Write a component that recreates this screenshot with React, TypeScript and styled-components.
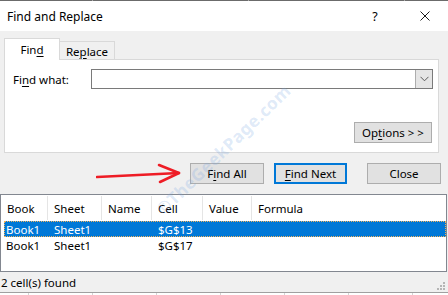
import styled, { createGlobalStyle } from 'styled-components'

const GlobalStyle = createGlobalStyle`
  html, body {
    margin: 0;
    padding: 0;
    background: #ffffff;
  }
  body {
    font-family: "Segoe UI", "Noto Sans", "Open Sans", sans-serif;
    font-size: 11.5px;
    color: #000000;
  }
`

const U = styled.span`
  text-decoration: underline;
  text-underline-offset: 2px;
  text-decoration-thickness: 1px;
`

export default function App() {
  return (
    <>
      <GlobalStyle />
      <Dialog>
        <TopEdge />
        <TitleBar>
          <Title>Find and Replace</Title>
          <TitleButtons>
            <Help>?</Help>
            <CloseGlyph viewBox="0 0 10 10">
              <path d="M0.5 0.5 L9.5 9.5 M9.5 0.5 L0.5 9.5" stroke="#1a1a1a" strokeWidth="1" />
            </CloseGlyph>
          </TitleButtons>
        </TitleBar>

        <Body>
          <TabRow>
            <Tab $active>
              Fin<U>d</U>
            </Tab>
            <Tab>
              Re<U>p</U>lace
            </Tab>
          </TabRow>

          <Panel>
            <FieldRow>
              <Label>
                Fi<U>n</U>d what:
              </Label>
              <Combo>
                <ComboInput />
                <ComboButton>
                  <svg width="9" height="6" viewBox="0 0 9 6">
                    <path d="M0.5 0.8 L4.5 4.8 L8.5 0.8" fill="none" stroke="#5a5a5a" strokeWidth="1" />
                  </svg>
                </ComboButton>
              </Combo>
            </FieldRow>
            <OptionsRow>
              <Button $w={78}>
                Op<U>t</U>ions &gt; &gt;
              </Button>
            </OptionsRow>
          </Panel>

          <ActionRow>
            <Arrow width="86" height="22" viewBox="0 0 86 22">
              <path d="M1 14 L83 10" stroke="#ee1c25" strokeWidth="2.6" strokeLinecap="round" />
              <path d="M63 2 L83 10 L64 19" fill="none" stroke="#ee1c25" strokeWidth="2.6" strokeLinecap="round" strokeLinejoin="round" />
            </Arrow>
            <Button $w={74}>
              F<U>i</U>nd All
            </Button>
            <Button $w={73} $default>
              <U>F</U>ind Next
            </Button>
            <Button $w={74} $gapLeft={10}>
              Close
            </Button>
          </ActionRow>

          <Results>
            <HeaderRow>
              <HeadCell>Book</HeadCell>
              <HeadCell>Sheet</HeadCell>
              <HeadCell>Name</HeadCell>
              <HeadCell>Cell</HeadCell>
              <HeadCell>Value</HeadCell>
              <HeadCell $last>Formula</HeadCell>
            </HeaderRow>
            <ResultRow $selected>
              <Cell>Book1</Cell>
              <Cell>Sheet1</Cell>
              <Cell />
              <Cell>$G$13</Cell>
              <Cell />
              <Cell />
            </ResultRow>
            <ResultRow>
              <Cell>Book1</Cell>
              <Cell>Sheet1</Cell>
              <Cell />
              <Cell>$G$17</Cell>
              <Cell />
              <Cell />
            </ResultRow>
          </Results>

          <StatusBar>
            <span>2 cell(s) found</span>
            <Grip width="9" height="9" viewBox="0 0 9 9">
              <rect x="6" y="0" width="2" height="2" fill="#b5b5b5" />
              <rect x="3" y="3" width="2" height="2" fill="#b5b5b5" />
              <rect x="6" y="3" width="2" height="2" fill="#b5b5b5" />
              <rect x="0" y="6" width="2" height="2" fill="#b5b5b5" />
              <rect x="3" y="6" width="2" height="2" fill="#b5b5b5" />
              <rect x="6" y="6" width="2" height="2" fill="#b5b5b5" />
            </Grip>
          </StatusBar>
        </Body>
        <BottomEdge />

        <Watermark>©TheGeekPage.com</Watermark>
      </Dialog>
    </>
  )
}

const Dialog = styled.div`
  position: relative;
  width: 448px;
  height: 295px;
  overflow: hidden;
  display: flex;
  flex-direction: column;
`

const TopEdge = styled.div`
  height: 1px;
  background: repeating-linear-gradient(
    to right,
    #6b6b6b 0px,
    #6b6b6b 92px,
    #a8a8a8 92px,
    #a8a8a8 93px,
    #6b6b6b 93px,
    #6b6b6b 156px
  );
`

const TitleBar = styled.div`
  height: 30px;
  background: #ffffff;
  display: flex;
  align-items: center;
  justify-content: space-between;
  padding: 0 0 0 7px;
`

const Title = styled.div`
  font-size: 12px;
  margin-top: 1px;
`

const TitleButtons = styled.div`
  display: flex;
  align-items: center;
`

const Help = styled.span`
  font-size: 12.5px;
  width: 12px;
  text-align: center;
  margin-right: 39px;
`

const CloseGlyph = styled.svg`
  width: 10px;
  height: 10px;
  margin-right: 18px;
`

const Body = styled.div`
  flex: 1;
  background: #f0f0f0;
  display: flex;
  flex-direction: column;
  padding-top: 7px;
`

const TabRow = styled.div`
  height: 21px;
  display: flex;
  align-items: flex-end;
  padding-left: 4px;
  position: relative;
  z-index: 1;
`

const Tab = styled.div<{ $active?: boolean }>`
  box-sizing: border-box;
  width: ${(p) => (p.$active ? 56 : 55)}px;
  height: ${(p) => (p.$active ? 22 : 18)}px;
  margin-bottom: ${(p) => (p.$active ? -1 : 0)}px;
  background: ${(p) => (p.$active ? '#ffffff' : '#f0f0f0')};
  border: 1px solid #d9d9d9;
  border-bottom: none;
  border-left: ${(p) => (p.$active ? '1px solid #d9d9d9' : 'none')};
  display: flex;
  align-items: center;
  justify-content: center;
  padding-top: ${(p) => (p.$active ? 0 : 1)}px;
`

const Panel = styled.div`
  box-sizing: border-box;
  height: 94px;
  margin: 0 9px 0 4px;
  background: #ffffff;
  border: 1px solid #d9d9d9;
  display: flex;
  flex-direction: column;
  padding: 9px 5px 0 8px;
`

const FieldRow = styled.div`
  display: flex;
  align-items: center;
  height: 20px;
`

const Label = styled.div`
  width: 78px;
  flex-shrink: 0;
`

const Combo = styled.div`
  box-sizing: border-box;
  flex: 1;
  height: 20px;
  border: 1px solid #7a7a7a;
  display: flex;
  background: #ffffff;
`

const ComboInput = styled.div`
  flex: 1;
`

const ComboButton = styled.div`
  box-sizing: border-box;
  width: 17px;
  background: #e5e5e5;
  border-left: 1px solid #adadad;
  display: flex;
  align-items: center;
  justify-content: center;
`

const OptionsRow = styled.div`
  display: flex;
  justify-content: flex-end;
  margin-top: 33px;
  padding-right: 1px;
`

const Button = styled.div<{ $w: number; $default?: boolean; $gapLeft?: number }>`
  box-sizing: border-box;
  width: ${(p) => p.$w}px;
  height: 21px;
  margin-left: ${(p) => p.$gapLeft ?? 0}px;
  background: #e1e1e1;
  border: ${(p) => (p.$default ? '2px solid #0078d7' : '1px solid #adadad')};
  display: flex;
  align-items: center;
  justify-content: center;
  flex-shrink: 0;
`

const ActionRow = styled.div`
  display: flex;
  align-items: center;
  gap: 10px;
  height: 21px;
  margin-top: 10px;
  padding-left: 96px;
`

const Arrow = styled.svg`
  flex-shrink: 0;
  margin-right: -2px;
`

const Results = styled.div`
  box-sizing: border-box;
  height: 78px;
  margin: 10px 1px 0 0;
  background: #ffffff;
  border: 1px solid #828790;
  display: flex;
  flex-direction: column;
`

const HeaderRow = styled.div`
  display: grid;
  grid-template-columns: 47px 54px 50px 51px 49px 1fr;
  height: 26px;
  padding-top: 1px;
  box-sizing: border-box;
`

const HeadCell = styled.div<{ $last?: boolean }>`
  display: flex;
  align-items: center;
  padding-left: 6px;
  border-right: ${(p) => (p.$last ? 'none' : '1px solid #e5e5e5')};
  margin-bottom: 1px;
`

const ResultRow = styled.div<{ $selected?: boolean }>`
  display: grid;
  grid-template-columns: 44px 54px 50px 51px 49px 1fr;
  box-sizing: border-box;
  height: ${(p) => (p.$selected ? 16 : 17)}px;
  margin: 0 0 0 3px;
  background: ${(p) => (p.$selected ? '#0078d7' : 'transparent')};
  color: ${(p) => (p.$selected ? '#ffffff' : '#000000')};
  outline: ${(p) => (p.$selected ? '1px dotted #f2b25c' : 'none')};
  outline-offset: -1px;
`

const Cell = styled.div`
  display: flex;
  align-items: center;
  padding-left: 6px;
  white-space: nowrap;

  &:first-child {
    padding-left: 2px;
  }
`

const StatusBar = styled.div`
  height: 20px;
  display: flex;
  align-items: center;
  justify-content: space-between;
  padding: 0 2px 0 1px;
`

const Grip = styled.svg`
  align-self: flex-end;
  margin-bottom: 1px;
`

const BottomEdge = styled.div`
  height: 3px;
  box-sizing: border-box;
  border-top: 1px solid #a0a0a0;
  background: repeating-linear-gradient(
    to right,
    #ffffff 0px,
    #ffffff 28px,
    #d4d4d4 28px,
    #d4d4d4 29px,
    #ffffff 29px,
    #ffffff 64px
  );
`

const Watermark = styled.div`
  position: absolute;
  left: 134px;
  top: 138px;
  font-family: "Noto Sans", sans-serif;
  font-weight: 700;
  font-size: 17px;
  letter-spacing: 0.5px;
  color: rgba(120, 165, 225, 0.24);
  transform: rotate(-44deg);
  transform-origin: center;
  pointer-events: none;
  white-space: nowrap;
`
